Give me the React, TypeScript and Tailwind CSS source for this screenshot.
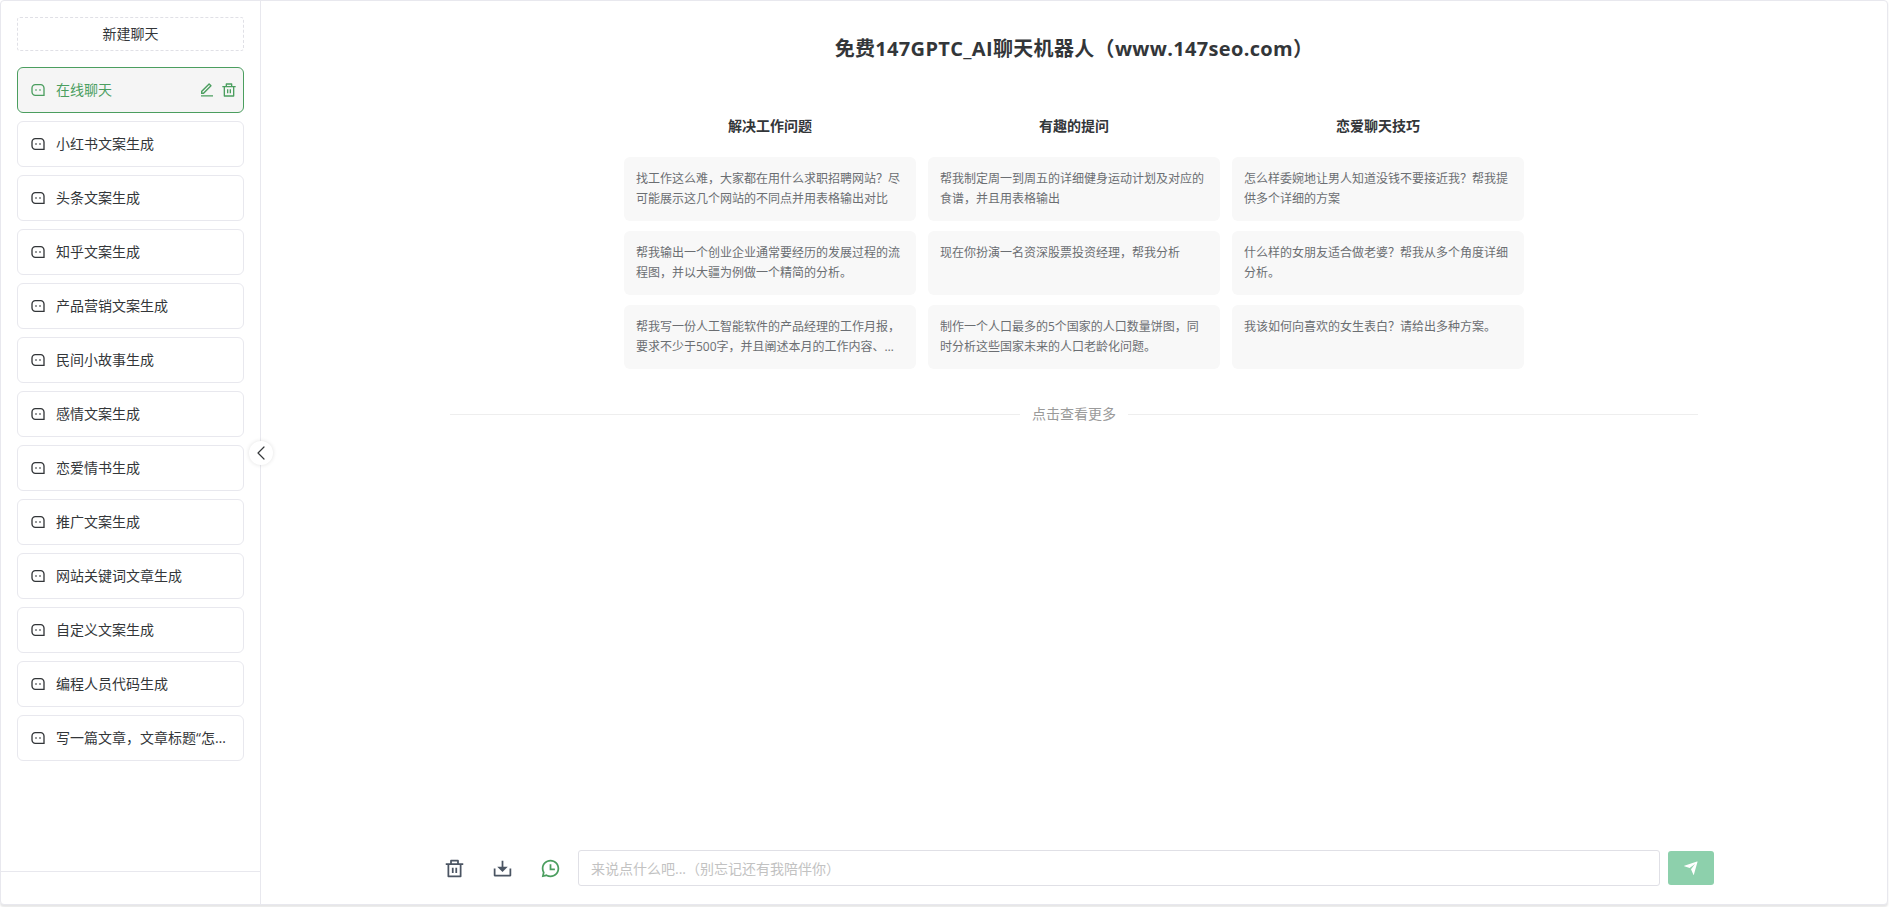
import React from 'react';
import { RiChatHistoryLine, RiDeleteBinLine, RiDownload2Line, RiEditLine, RiMessage3Line, RiSendPlaneFill } from 'react-icons/ri';
import { ChevronLeft } from 'lucide-react';

const chats = [
    '在线聊天',
    '小红书文案生成',
    '头条文案生成',
    '知乎文案生成',
    '产品营销文案生成',
    '民间小故事生成',
    '感情文案生成',
    '恋爱情书生成',
    '推广文案生成',
    '网站关键词文章生成',
    '自定义文案生成',
    '编程人员代码生成',
    '写一篇文章，文章标题“怎么学习人工智能”',
];

const columns = [
    {
        title: '解决工作问题',
        prompts: [
            '找工作这么难，大家都在用什么求职招聘网站？尽可能展示这几个网站的不同点并用表格输出对比',
            '帮我输出一个创业企业通常要经历的发展过程的流程图，并以大疆为例做一个精简的分析。',
            '帮我写一份人工智能软件的产品经理的工作月报，要求不少于500字，并且阐述本月的工作内容、下月的工作计划以及遇到的问题和解决方法',
        ],
    },
    {
        title: '有趣的提问',
        prompts: [
            '帮我制定周一到周五的详细健身运动计划及对应的食谱，并且用表格输出',
            '现在你扮演一名资深股票投资经理，帮我分析',
            '制作一个人口最多的5个国家的人口数量饼图，同时分析这些国家未来的人口老龄化问题。',
        ],
    },
    {
        title: '恋爱聊天技巧',
        prompts: [
            '怎么样委婉地让男人知道没钱不要接近我？帮我提供多个详细的方案',
            '什么样的女朋友适合做老婆？帮我从多个角度详细分析。',
            '我该如何向喜欢的女生表白？请给出多种方案。',
        ],
    },
];

const fontStack = "font-['Open_Sans','Noto_Sans_CJK_SC',sans-serif]";

const Sidebar: React.FC = () => (
    <aside className="relative flex w-[260px] shrink-0 flex-col border-r border-[#e8e8ee]">
        <div className="flex-1 px-4 pt-4">
            <button className="h-[34px] w-full rounded-[3px] border border-dashed border-[#e0e0e6] text-sm text-[#333639]">新建聊天</button>
            <div className="mt-4 flex flex-col gap-2">
                {chats.map((chat, i) => (
                    <div
                        key={chat}
                        className={`relative flex items-center gap-2.5 rounded-md border p-3 text-sm ${i === 0 ? 'border-[#4b9e5f] bg-[#f5f5f5] text-[#4b9e5f]' : 'border-[#e8e8ee] text-[#333639]'}`}
                    >
                        <RiMessage3Line size={16} className="shrink-0" />
                        <span className={`h-5 truncate leading-5 ${i === 0 ? 'w-[100px]' : ''}`}>{chat}</span>
                        {i === 0 && (
                            <div className="absolute right-[6px] top-[14px] flex gap-[6.5px]">
                                <RiEditLine size={16} />
                                <RiDeleteBinLine size={16} />
                            </div>
                        )}
                    </div>
                ))}
            </div>
        </div>
        <div className="h-[33px] border-t border-[#e8e8ee]" />
        <button className="absolute right-[-13px] top-[440px] flex h-6 w-6 items-center justify-center rounded-full bg-white text-[#333639] shadow-[0_0_4px_rgba(0,0,0,0.12)]">
            <ChevronLeft size={24} strokeWidth={1.2} />
        </button>
    </aside>
);

const PromptCard: React.FC<{ text: string }> = ({ text }) => (
    <div className="h-16 rounded-md bg-[#f8f8f8] p-3 text-xs leading-5 text-[#6b6e72]">
        <p className="line-clamp-2">{text}</p>
    </div>
);

export default function App() {
    return (
        <div className={`${fontStack} h-[907px] w-[1889px] overflow-hidden bg-white`}>
            <div className="flex h-[905px] w-[1888px] rounded-[4px] border border-[#e8e8ee] bg-white shadow-[0_2px_2px_rgba(0,0,0,0.1)]">
                <Sidebar />
                <main className="flex min-w-0 flex-1 flex-col">
                    <div className="flex-1 pt-[34px]">
                        <h1 className="text-center text-xl font-bold tracking-[0.33px] text-[#333639]">免费147GPTC_AI聊天机器人（www.147seo.com）</h1>
                        <div className="mx-auto mt-[53px] grid w-[900px] grid-cols-3 gap-x-3">
                            {columns.map(col => (
                                <div key={col.title}>
                                    <h2 className="text-center text-sm font-bold text-[#333639]">{col.title}</h2>
                                    <div className="mt-[21px] flex flex-col gap-2.5">
                                        {col.prompts.map(p => <PromptCard key={p} text={p} />)}
                                    </div>
                                </div>
                            ))}
                        </div>
                        <div className="mx-auto mt-[35px] flex w-[1248px] items-center gap-3 text-sm text-[#9a9a9a]">
                            <div className="h-px flex-1 bg-[#eeeeee]" />
                            <span>点击查看更多</span>
                            <div className="h-px flex-1 bg-[#eeeeee]" />
                        </div>
                    </div>
                    <footer className="pb-4">
                        <div className="mx-auto flex w-[1280px] items-center gap-2">
                            <button className="flex h-10 w-10 items-center justify-center text-[#4b5563]"><RiDeleteBinLine size={21} /></button>
                            <button className="flex h-10 w-10 items-center justify-center text-[#4b5563]"><RiDownload2Line size={21} /></button>
                            <button className="flex h-10 w-10 items-center justify-center text-[#4b9e5f]"><RiChatHistoryLine size={21} /></button>
                            <input
                                placeholder="来说点什么吧...（别忘记还有我陪伴你）"
                                className="h-9 min-w-0 flex-1 rounded-[3px] border border-[#e0e0e6] px-3 text-sm outline-none placeholder:text-[#c2c2c2]"
                            />
                            <button className="flex h-[34px] w-[46px] items-center justify-center rounded-[3px] bg-[#8dd0ac] text-white"><RiSendPlaneFill size={16} /></button>
                        </div>
                    </footer>
                </main>
            </div>
        </div>
    );
}
